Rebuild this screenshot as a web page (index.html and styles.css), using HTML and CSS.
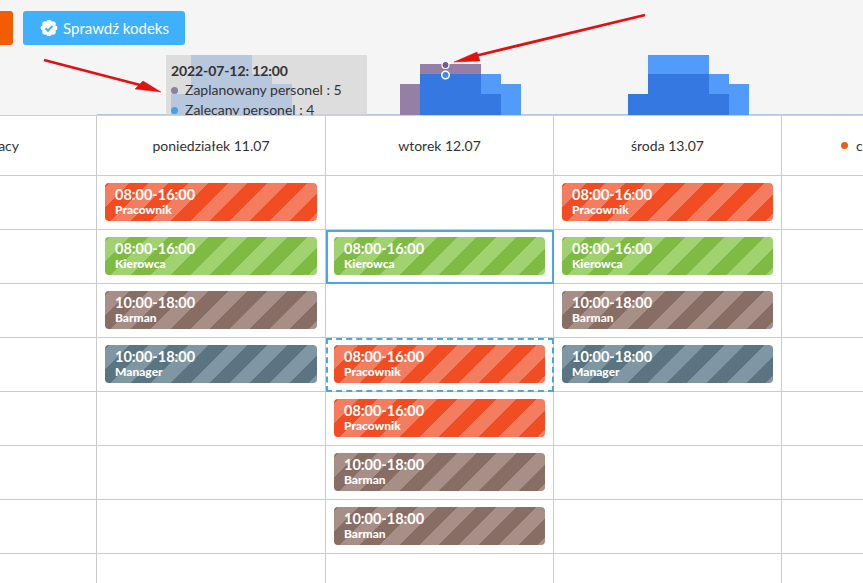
FILE: index.html
```html
<!DOCTYPE html>
<html lang="pl">
<head>
    <meta charset="UTF-8">
    <meta name="viewport" content="width=device-width, initial-scale=1.0">
    <title>Grafik</title>
    <link rel="stylesheet" href="styles.css">
</head>
<body>
    <div class="topbar">
        <svg class="chart" width="863" height="116" viewBox="0 0 863 116">
            <line x1="97" y1="115" x2="863" y2="115" stroke="#7d97c9"/>
            <g fill="#5d9ffb">
                <rect x="171" y="94" width="20" height="21"/>
                <rect x="191" y="55" width="61" height="60"/>
                <rect x="252" y="74" width="20" height="41"/>
                <rect x="272" y="84" width="20" height="31"/>
            </g>
            <!-- wtorek -->
            <g fill="#957fa6">
                <rect x="400" y="84" width="20" height="31"/>
                <rect x="420" y="64" width="61" height="10"/>
            </g>
            <g fill="#539bfb">
                <rect x="481" y="74" width="20" height="20"/>
                <rect x="501" y="84" width="20" height="31"/>
            </g>
            <g fill="#3578e2">
                <rect x="420" y="74" width="61" height="41"/>
                <rect x="481" y="94" width="20" height="21"/>
            </g>
            <circle cx="445.500" cy="65" r="3.500" fill="#75598f" stroke="#fff" stroke-width="1.200"/>
            <circle cx="445.500" cy="75" r="3.800" fill="#3f86e6" stroke="#fff" stroke-width="1.500"/>
            <!-- sroda -->
            <g fill="#539bfb">
                <rect x="648" y="55" width="61" height="19"/>
                <rect x="709" y="74" width="20" height="20"/>
                <rect x="729" y="84" width="20" height="31"/>
            </g>
            <g fill="#3578e2">
                <rect x="628" y="94" width="20" height="21"/>
                <rect x="648" y="74" width="61" height="41"/>
                <rect x="709" y="94" width="20" height="21"/>
            </g>
        </svg>

        <div class="toolbar">
            <button class="btn btn-orange"></button>
            <button class="btn btn-blue">
                <svg class="btn-icon" width="18" height="18" viewBox="0 0 18 18">
                    <g fill="#fff">
                        <circle cx="9" cy="9" r="6.500"/>
                        <circle cx="9" cy="3.400" r="2.700"/>
                        <circle cx="9" cy="14.600" r="2.700"/>
                        <circle cx="3.400" cy="9" r="2.700"/>
                        <circle cx="14.600" cy="9" r="2.700"/>
                        <circle cx="5" cy="5" r="2.700"/>
                        <circle cx="13" cy="5" r="2.700"/>
                        <circle cx="5" cy="13" r="2.700"/>
                        <circle cx="13" cy="13" r="2.700"/>
                    </g>
                    <path d="M5.600 9.300l2.400 2.400 4.400-4.800" fill="none" stroke="#3fb0fb" stroke-width="2"/>
                </svg>
                Sprawdź kodeks
            </button>
        </div>

        <div class="tooltip">
            <div class="tooltip-title">2022-07-12: 12:00</div>
            <div class="tooltip-row"><span class="dot dot-purple"></span>Zaplanowany personel : 5</div>
            <div class="tooltip-row"><span class="dot dot-blue"></span>Zalecany personel : 4</div>
        </div>

        <svg class="arrows" width="863" height="116" viewBox="0 0 863 116">
            <g fill="#e2100f" stroke="#e2100f">
                <line x1="44" y1="60" x2="140" y2="85" stroke-width="2.800"/>
                <polygon points="161,92 143,81 135,89" stroke-width="0.500"/>
                <line x1="645" y1="15" x2="475" y2="56" stroke-width="2.800"/>
                <polygon points="454,62 477,52 480,61" stroke-width="0.500"/>
            </g>
        </svg>
    </div>

    <div class="schedule">
        <div class="cell head head-first"><span>Stanowisko pracy</span></div>
        <div class="cell head">poniedziałek 11.07</div>
        <div class="cell head">wtorek 12.07</div>
        <div class="cell head">środa 13.07</div>
        <div class="cell head"><span class="today-dot"></span>czwartek 14.07</div>

        <div class="cell"></div>
        <div class="cell"><div class="shift shift-orange"><b>08:00-16:00</b><small>Pracownik</small></div></div>
        <div class="cell"></div>
        <div class="cell"><div class="shift shift-orange"><b>08:00-16:00</b><small>Pracownik</small></div></div>
        <div class="cell"></div>

        <div class="cell"></div>
        <div class="cell"><div class="shift shift-green"><b>08:00-16:00</b><small>Kierowca</small></div></div>
        <div class="cell cell-active"><div class="shift shift-green"><b>08:00-16:00</b><small>Kierowca</small></div></div>
        <div class="cell"><div class="shift shift-green"><b>08:00-16:00</b><small>Kierowca</small></div></div>
        <div class="cell"></div>

        <div class="cell"></div>
        <div class="cell"><div class="shift shift-brown"><b>10:00-18:00</b><small>Barman</small></div></div>
        <div class="cell"></div>
        <div class="cell"><div class="shift shift-brown"><b>10:00-18:00</b><small>Barman</small></div></div>
        <div class="cell"></div>

        <div class="cell"></div>
        <div class="cell"><div class="shift shift-slate"><b>10:00-18:00</b><small>Manager</small></div></div>
        <div class="cell cell-drop"><div class="shift shift-orange"><b>08:00-16:00</b><small>Pracownik</small></div></div>
        <div class="cell"><div class="shift shift-slate"><b>10:00-18:00</b><small>Manager</small></div></div>
        <div class="cell"></div>

        <div class="cell"></div>
        <div class="cell"></div>
        <div class="cell"><div class="shift shift-orange"><b>08:00-16:00</b><small>Pracownik</small></div></div>
        <div class="cell"></div>
        <div class="cell"></div>

        <div class="cell"></div>
        <div class="cell"></div>
        <div class="cell"><div class="shift shift-brown"><b>10:00-18:00</b><small>Barman</small></div></div>
        <div class="cell"></div>
        <div class="cell"></div>

        <div class="cell"></div>
        <div class="cell"></div>
        <div class="cell"><div class="shift shift-brown"><b>10:00-18:00</b><small>Barman</small></div></div>
        <div class="cell"></div>
        <div class="cell"></div>

        <div class="cell"></div>
        <div class="cell"></div>
        <div class="cell"></div>
        <div class="cell"></div>
        <div class="cell"></div>
    </div>
</body>
</html>
```

FILE: styles.css
```css
html, body {
    margin: 0;
    height: 100%;
    overflow: hidden;
}
body {
    font-family: 'Lato', 'Liberation Sans', sans-serif;
    background-color: #fff;
    color: #333;
}
.topbar {
    position: relative;
    height: 115px;
    background-color: #f5f5f5;
    overflow: hidden;
}
.chart, .arrows {
    position: absolute;
    left: 0;
    top: 0;
}
.toolbar {
    display: flex;
    gap: 10px;
    padding-top: 11px;
}
.btn {
    height: 34px;
    border: none;
    border-radius: 0 3px 3px 0;
    padding: 0;
    font-family: inherit;
}
.btn-orange {
    width: 13px;
    background-color: #f25c05;
}
.btn-blue {
    display: flex;
    align-items: center;
    gap: 5px;
    width: 162px;
    padding-left: 17px;
    border-radius: 3px;
    background-color: #3fb0fb;
    color: #fff;
    font-size: 15px;
    box-sizing: border-box;
}
.btn-icon {
    flex: none;
}
.tooltip {
    position: absolute;
    left: 166px;
    top: 55px;
    width: 201px;
    height: 70px;
    padding: 6px 5px;
    box-sizing: border-box;
    background-color: rgba(212, 212, 212, 0.75);
    color: #333;
    font-size: 14px;
    line-height: 20px;
}
.tooltip-title {
    font-weight: 700;
    font-size: 14px;
    letter-spacing: -0.1px;
    line-height: 19px;
}
.tooltip-row {
    display: flex;
    align-items: center;
}
.dot {
    width: 7px;
    height: 7px;
    margin-right: 7px;
    border-radius: 50%;
}
.dot-purple {
    background-color: #8f7fa0;
}
.dot-blue {
    background-color: #4a9fe5;
}
.schedule {
    display: grid;
    grid-template-columns: 97px 229px 228px 228px 229px;
    grid-template-rows: 60px;
    grid-auto-rows: 54px;
    border-top: 1px solid #cfcfd4;
}
.cell {
    min-width: 0;
    padding: 7px 8px 8px 8px;
    box-sizing: border-box;
    border-right: 1px solid #ccc;
    border-bottom: 1px solid #ccc;
    background-color: #fff;
}
.head {
    display: flex;
    align-items: center;
    justify-content: center;
    font-size: 14px;
    white-space: nowrap;
    overflow: hidden;
}
.head-first {
    justify-content: flex-end;
    padding-right: 77px;
}
.today-dot {
    width: 7px;
    height: 7px;
    margin-right: 8px;
    border-radius: 50%;
    background-color: #e85d10;
}
.cell-active {
    outline: 2px solid #4ba6e8;
    outline-offset: -2px;
}
.cell-drop {
    outline: 2px dashed #4ba6e8;
    outline-offset: -2px;
}
.shift {
    display: flex;
    flex-direction: column;
    height: 38px;
    padding: 3px 10px 0 10px;
    box-sizing: border-box;
    border-radius: 4px;
    color: #fff;
}
.shift b {
    font-size: 14.500px;
    font-weight: 700;
    line-height: 17px;
}
.shift small {
    font-size: 12px;
    font-weight: 900;
    line-height: 14px;
}
.shift-orange {
    background: repeating-linear-gradient(135deg, #f47d5f 3px, #f47d5f 17px, #f24d22 17px, #f24d22 31px);
}
.shift-green {
    background: repeating-linear-gradient(135deg, #a0d26f 3px, #a0d26f 17px, #7fbb42 17px, #7fbb42 31px);
}
.shift-brown {
    background: repeating-linear-gradient(135deg, #a78f87 3px, #a78f87 17px, #886d64 17px, #886d64 31px);
}
.shift-slate {
    background: repeating-linear-gradient(135deg, #7f97a3 3px, #7f97a3 17px, #5a7482 17px, #5a7482 31px);
}
```
